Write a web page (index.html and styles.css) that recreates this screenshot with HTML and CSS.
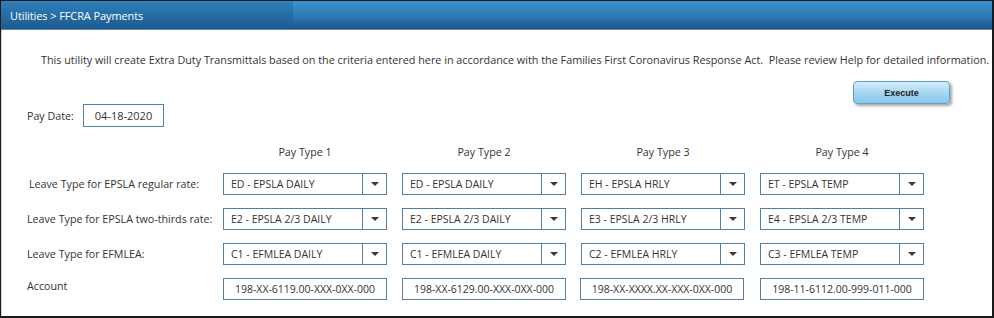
FILE: index.html
```
<!DOCTYPE html>
<html>
<head>
<meta charset="utf-8">
<link rel="stylesheet" href="styles.css">
</head>
<body>
<div class="frame">
  <div class="header">
    <div class="tab"><span class="title">Utilities &gt; FFCRA Payments</span></div>
    <div class="bar"></div>
  </div>
  <div class="content">
    <p class="intro">This utility will create Extra Duty Transmittals based on the criteria entered here in accordance with the Families First Coronavirus Response Act.&nbsp; Please review Help for detailed information.</p>
    <div class="action-row"><button class="execute">Execute</button></div>
    <div class="paydate-row">
      <span class="label">Pay Date:</span>
      <input class="date" type="text" value="04-18-2020">
    </div>
    <div class="grid">
      <span></span>
      <span class="colhead">Pay Type 1</span>
      <span class="colhead">Pay Type 2</span>
      <span class="colhead">Pay Type 3</span>
      <span class="colhead">Pay Type 4</span>

      <span class="rowlabel first">Leave Type for EPSLA regular rate:</span>
      <div class="select"><span class="val">ED - EPSLA DAILY</span><span class="arrow"></span></div>
      <div class="select"><span class="val">ED - EPSLA DAILY</span><span class="arrow"></span></div>
      <div class="select"><span class="val">EH - EPSLA HRLY</span><span class="arrow"></span></div>
      <div class="select"><span class="val">ET - EPSLA TEMP</span><span class="arrow"></span></div>

      <span class="rowlabel">Leave Type for EPSLA two-thirds rate:</span>
      <div class="select"><span class="val">E2 - EPSLA 2/3 DAILY</span><span class="arrow"></span></div>
      <div class="select"><span class="val">E2 - EPSLA 2/3 DAILY</span><span class="arrow"></span></div>
      <div class="select"><span class="val">E3 - EPSLA 2/3 HRLY</span><span class="arrow"></span></div>
      <div class="select"><span class="val">E4 - EPSLA 2/3 TEMP</span><span class="arrow"></span></div>

      <span class="rowlabel">Leave Type for EFMLEA:</span>
      <div class="select"><span class="val">C1 - EFMLEA DAILY</span><span class="arrow"></span></div>
      <div class="select"><span class="val">C1 - EFMLEA DAILY</span><span class="arrow"></span></div>
      <div class="select"><span class="val">C2 - EFMLEA HRLY</span><span class="arrow"></span></div>
      <div class="select"><span class="val">C3 - EFMLEA TEMP</span><span class="arrow"></span></div>

      <span class="rowlabel account">Account</span>
      <input class="acct" type="text" value="198-XX-6119.00-XXX-0XX-000">
      <input class="acct" type="text" value="198-XX-6129.00-XXX-0XX-000">
      <input class="acct shift" type="text" value="198-XX-XXXX.XX-XXX-0XX-000">
      <input class="acct" type="text" value="198-11-6112.00-999-011-000">
    </div>
  </div>
</div>
</body>
</html>
```
FILE: styles.css
```
* { box-sizing: border-box; }
html, body { margin: 0; padding: 0; background: #fff; }
body { font-family: "Open Sans", "Noto Sans", sans-serif; color: #333; }

.frame {
  width: 994px;
  height: 318px;
  border: 1px solid #1a1a1a;
  border-bottom-width: 2px;
  border-right-width: 2px;
  display: flex;
  flex-direction: column;
  overflow: hidden;
}

.header {
  height: 29px;
  display: flex;
  flex: none;
  border-bottom: 1px solid #5a8cb6;
}
.tab {
  width: 292px;
  background: linear-gradient(#2f80bb, #1d5a8f);
  display: flex;
  align-items: center;
  padding-left: 9px;
}
.bar {
  flex: 1;
  background: linear-gradient(#3c92cb, #2e79b3 55%, #1d5489);
}
.title {
  color: #fff;
  font-size: 11px;
  letter-spacing: -0.1px;
}

.content {
  flex: 1;
  display: flex;
  flex-direction: column;
  border-left: 1px solid #d6d6d6;
}

.intro {
  margin: 22px 0 0 39px;
  font-size: 10.8px;
  line-height: 16px;
  white-space: nowrap;
}

.action-row {
  display: flex;
  justify-content: flex-end;
  padding-right: 42px;
  margin-top: 13px;
}
.execute {
  width: 97px;
  height: 23px;
  border: 1px solid #5f9ecc;
  border-radius: 4px;
  background: linear-gradient(#d4ecf9, #9fd3f0 60%, #8bc9ec);
  box-shadow: 2px 2px 3px rgba(0,0,0,0.35);
  font-family: "Liberation Sans", Arial, sans-serif;
  font-weight: bold;
  font-size: 9px;
  color: #222;
  padding: 0;
}

.paydate-row {
  display: flex;
  align-items: center;
  padding-left: 25px;
  height: 23px;
}
.label { font-size: 10.7px; width: 56px; }
.date {
  width: 81px;
  height: 23px;
  border: 1px solid #4f81ad;
  font-family: inherit;
  font-size: 11px;
  color: #333;
  text-align: center;
  padding: 0;
}

.grid {
  margin: 17px 0 0 25px;
  display: grid;
  grid-template-columns: 181px repeat(4, 164px);
  grid-template-rows: 16px repeat(4, 22px);
  column-gap: 15px;
  row-gap: 13px;
}
.colhead {
  font-size: 10.7px;
  text-align: center;
  line-height: 16px;
}
.rowlabel {
  font-size: 10.7px;
  line-height: 16px;
  align-self: center;
  white-space: nowrap;
}
.rowlabel.first { padding-left: 2px; }
.rowlabel.account { align-self: start; }

.select {
  display: flex;
  border: 1px solid #4f7ea9;
  background: #fff;
}
.val {
  flex: 1;
  font-size: 10.5px;
  line-height: 20px;
  padding-left: 7px;
  white-space: nowrap;
}
.arrow {
  width: 24px;
  border-left: 1px solid #4f7ea9;
  display: flex;
  align-items: center;
  justify-content: center;
}
.arrow::after {
  content: "";
  border-left: 4px solid transparent;
  border-right: 4px solid transparent;
  border-top: 4px solid #3a3a3a;
}

.acct {
  width: 164px;
  height: 22px;
  border: 1px solid #4f7ea9;
  font-family: inherit;
  font-size: 10.5px;
  color: #333;
  text-align: center;
  padding: 0;
}
.acct.shift { margin-left: -1px; }
```
